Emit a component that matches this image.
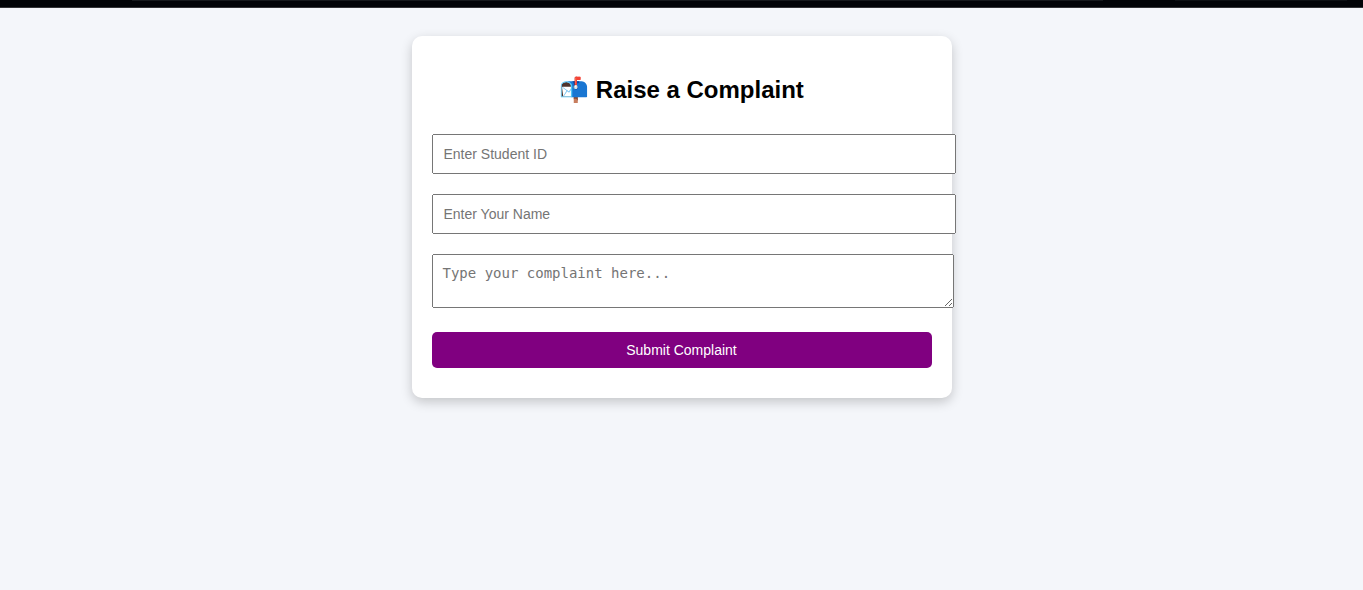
<div class="bar">
  <span class="tab wide"></span>
  <span class="tab"></span>
</div>
<main>
  <form class="card" onsubmit={(e) => e.preventDefault()}>
    <h2>📬 Raise a Complaint</h2>
    <input type="text" placeholder="Enter Student ID" aria-label="Enter Student ID" />
    <input type="text" placeholder="Enter Your Name" aria-label="Enter Your Name" />
    <textarea placeholder="Type your complaint here..." aria-label="Type your complaint here..."></textarea>
    <button type="submit">Submit Complaint</button>
  </form>
</main>

<style>
  :global(body) {
    margin: 0;
    background: #f4f6fa;
    font-family: "Liberation Sans", Arial, sans-serif;
  }

  .bar {
    display: flex;
    gap: 72px;
    height: 7px;
    padding: 0 16px 0 132px;
    border-bottom: 1px solid #333438;
    background: #020408;
  }

  .tab {
    flex: 172;
    height: 1px;
    background: #0d1014;
  }

  .wide {
    flex: 971;
    background: #16191d;
  }

  main {
    padding: 28px 0;
  }

  .card {
    max-width: 500px;
    margin: 0 auto;
    padding: 20px;
    background: #fff;
    border-radius: 10px;
    box-shadow: 0 4px 12px rgba(0, 0, 0, 0.2);
  }

  h2 {
    margin: 20px 0 31px;
    font-size: 24px;
    line-height: 27px;
    text-align: center;
  }

  input,
  textarea {
    display: block;
    width: 100%;
    margin: 0 0 20px;
    padding: 10px;
    font-size: 14px;
  }

  input {
    font-family: inherit;
  }

  textarea {
    margin-bottom: 24px;
    font-family: "DejaVu Sans Mono", monospace;
  }

  button {
    width: 100%;
    margin-bottom: 10px;
    padding: 10px;
    border: none;
    border-radius: 5px;
    background: purple;
    color: #fff;
    font-family: inherit;
    font-size: 14px;
    line-height: 16px;
    cursor: pointer;
  }
</style>
